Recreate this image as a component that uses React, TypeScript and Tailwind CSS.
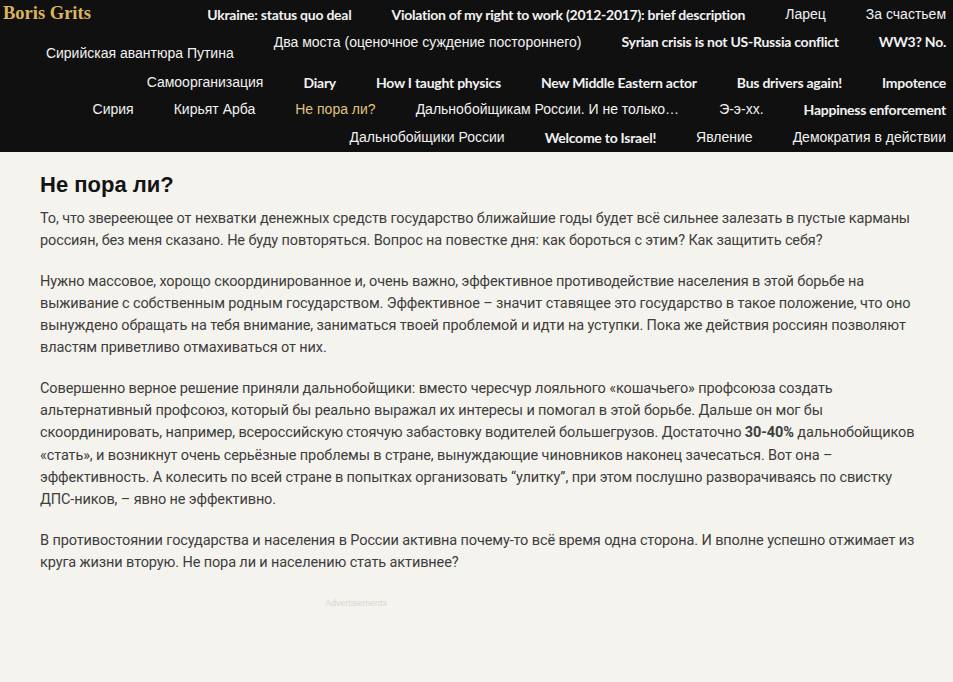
const row1 = [
  { t: 'Ukraine: status quo deal', en: true },
  { t: 'Violation of my right to work (2012-2017): brief description', en: true },
  { t: 'Ларец' },
  { t: 'За счастьем' },
];
const row2 = [
  { t: 'Два моста (оценочное суждение постороннего)' },
  { t: 'Syrian crisis is not US-Russia conflict', en: true },
  { t: 'WW3? No.', en: true },
];
const row3 = [
  { t: 'Самоорганизация' },
  { t: 'Diary', en: true },
  { t: 'How I taught physics', en: true },
  { t: 'New Middle Eastern actor', en: true },
  { t: 'Bus drivers again!', en: true },
  { t: 'Impotence', en: true },
];
const row4 = [
  { t: 'Сирия' },
  { t: 'Кирьят Арба' },
  { t: 'Не пора ли?', active: true },
  { t: 'Дальнобойщикам России. И не только…' },
  { t: 'Э-э-хх.' },
  { t: 'Happiness enforcement', en: true },
];
const row5 = [
  { t: 'Дальнобойщики России' },
  { t: 'Welcome to Israel!', en: true },
  { t: 'Явление' },
  { t: 'Демократия в действии' },
];

type Item = { t: string; en?: boolean; active?: boolean };

function NavLink({ item }: { item: Item }) {
  const cls = item.en
    ? "font-['Lato',sans-serif] font-bold text-[14px] tracking-[-0.25px]"
    : "font-['Liberation_Sans',sans-serif] text-[14px]";
  return (
    <a href="#" className={`${cls} whitespace-nowrap ${item.active ? 'text-[#e2c27d]' : 'text-[#f2f2f2]'}`}>
      {item.t}
    </a>
  );
}

function NavRow({ items, className = '' }: { items: Item[]; className?: string }) {
  return (
    <div className={`flex justify-end gap-10 ${className}`}>
      {items.map((it) => <NavLink key={it.t} item={it} />)}
    </div>
  );
}

export default function App() {
  return (
    <div className="min-h-[682px] bg-[#f5f3ee]">
      <header className="bg-[#101010] h-[152px] pr-[7px]">
        <div className="flex items-center h-[28px]">
          <a href="#" className="pl-[3px] font-['Liberation_Serif',serif] font-bold text-[18.5px] text-[#dcb45c]">Boris Grits</a>
          <NavRow items={row1} className="flex-1" />
        </div>
        <div className="flex justify-end gap-10 h-[40px] pt-[1px]">
          <div className="pt-[11px]"><NavLink item={{ t: 'Сирийская авантюра Путина' }} /></div>
          {row2.map((it) => <div key={it.t}><NavLink item={it} /></div>)}
        </div>
        <NavRow items={row3} className="h-[28px] items-center" />
        <NavRow items={row4} className="h-[27px] items-center" />
        <NavRow items={row5} className="h-[28px] items-center" />
      </header>

      <main className="pl-[40px] pr-[30px] pt-[19px] font-['Roboto',sans-serif] text-[14.5px] tracking-[-0.12px] leading-[22.3px] text-[#3d3d3d]">
        <h1 className="font-['Liberation_Sans',sans-serif] font-bold text-[22px] tracking-normal leading-[28px] text-[#141414] mb-[9px]">Не пора ли?</h1>
        <p className="mb-[18px]">
          То, что зверееющее от нехватки денежных средств государство ближайшие годы будет всё сильнее залезать в пустые карманы россиян, без меня сказано. Не буду повторяться. Вопрос на повестке дня: как бороться с этим? Как защитить себя?
        </p>
        <p className="mb-[18px]">
          Нужно массовое, хорощо скоординированное и, очень важно, эффективное противодействие населения в этой борьбе на выживание с собственным родным государством. Эффективное – значит ставящее это государство в такое положение, что оно вынуждено обращать на тебя внимание, заниматься твоей проблемой и идти на уступки. Пока же действия россиян позволяют властям приветливо отмахиваться от них.
        </p>
        <p className="mb-[18px]">
          Совершенно верное решение приняли дальнобойщики: вместо чересчур лояльного «кошачьего» профсоюза создать альтернативный профсоюз, который бы реально выражал их интересы и помогал в этой борьбе. Дальше он мог бы скоординировать, например, всероссийскую стоячую забастовку водителей большегрузов. Достаточно <strong className="font-bold">30-40%</strong> дальнобойщиков «стать», и возникнут очень серьёзные проблемы в стране, вынуждающие чиновников наконец зачесаться. Вот она – эффективность. А колесить по всей стране в попытках организовать “улитку”, при этом послушно разворачиваясь по свистку ДПС-ников, – явно не эффективно.
        </p>
        <p className="mb-[18px]">
          В противостоянии государства и населения в России активна почему-то всё время одна сторона. И вполне успешно отжимает из круга жизни вторую. Не пора ли и населению стать активнее?
        </p>
        <div className="pl-[285px] pt-0 font-['Liberation_Sans',sans-serif] text-[9px] tracking-normal text-[#d8d6cf]">Advertisements</div>
      </main>
    </div>
  );
}
